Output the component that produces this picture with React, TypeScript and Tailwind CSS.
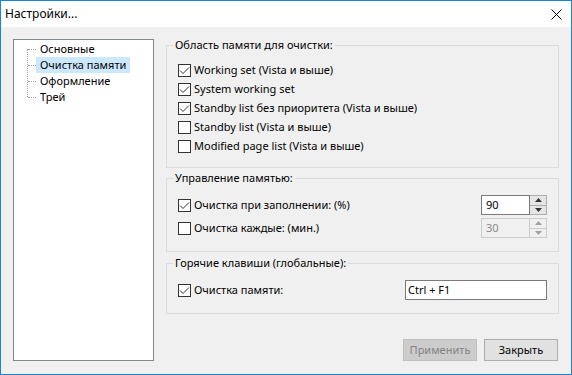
import React from "react";

const checked = [true, true, true, false, false];
const memoryItems = [
  "Working set (Vista и выше)",
  "System working set",
  "Standby list без приоритета (Vista и выше)",
  "Standby list (Vista и выше)",
  "Modified page list (Vista и выше)",
];
const treeItems = ["Основные", "Очистка памяти", "Оформление", "Трей"];

function CheckBox({ on }: { on: boolean }) {
  return (
    <span className="w-[13px] h-[13px] border border-[#333333] bg-white flex items-center justify-center shrink-0">
      {on && (
        <svg width="11" height="11" viewBox="0 0 11 11">
          <path d="M1 5.5 L4 8.5 L10 2.5" fill="none" stroke="#333333" strokeWidth="1" />
        </svg>
      )}
    </span>
  );
}

function Check({ on, label }: { on: boolean; label: string }) {
  return (
    <div className="flex items-center h-[19px]">
      <CheckBox on={on} />
      <span className="ml-[3px] whitespace-nowrap">{label}</span>
    </div>
  );
}

function Spin({ value, disabled }: { value: string; disabled?: boolean }) {
  return (
    <div className="flex h-[20px]">
      <div
        className={
          disabled
            ? "w-[49px] h-full border border-[#cccccc] bg-[#f0f0f0] text-[#8a8a8a] pl-[4px] leading-[18px]"
            : "w-[49px] h-full border border-[#7a7a7a] bg-white pl-[4px] leading-[18px]"
        }
      >
        {value}
      </div>
      <div className="w-[17px] h-full flex flex-col">
        <div
          className={
            disabled
              ? "flex-1 border border-l-0 border-[#cccccc] bg-[#f0f0f0] flex items-center justify-center"
              : "flex-1 border border-l-0 border-[#adadad] bg-[#e5e5e5] flex items-center justify-center"
          }
        >
          <svg width="7" height="4" viewBox="0 0 7 4">
            <path d="M0 4 L3.5 0 L7 4 Z" fill={disabled ? "#a0a0a0" : "#333333"} />
          </svg>
        </div>
        <div
          className={
            disabled
              ? "flex-1 border border-l-0 border-t-0 border-[#cccccc] bg-[#f0f0f0] flex items-center justify-center"
              : "flex-1 border border-l-0 border-t-0 border-[#adadad] bg-[#e5e5e5] flex items-center justify-center"
          }
        >
          <svg width="7" height="4" viewBox="0 0 7 4">
            <path d="M0 0 L3.5 4 L7 0 Z" fill={disabled ? "#a0a0a0" : "#333333"} />
          </svg>
        </div>
      </div>
    </div>
  );
}

function Group({ title, className, children }: { title: string; className: string; children: React.ReactNode }) {
  return (
    <fieldset className={"border border-[#dcdcdc] px-[11px] " + className}>
      <legend className="ml-[-5px] px-[2px] leading-[16px]">{title}</legend>
      {children}
    </fieldset>
  );
}

export default function App() {
  return (
    <div className="w-[572px] h-[375px] border border-[#1883d7] bg-[#f0f0f0] flex flex-col text-[11px] text-black font-['Noto_Sans','DejaVu_Sans',sans-serif] overflow-hidden">
      {/* title bar */}
      <div className="h-[26px] bg-white flex items-center justify-between pl-[4px] pr-[9px] shrink-0 text-[12px]">
        <span>Настройки...</span>
        <svg width="11" height="11" viewBox="0 0 11 11">
          <path d="M0.5 0.5 L10.5 10.5 M10.5 0.5 L0.5 10.5" stroke="#000" strokeWidth="1" />
        </svg>
      </div>

      <div className="flex pl-[12px] pt-[10px]">
        {/* tree */}
        <div className="mt-[2px] w-[141px] h-[322px] border border-[#828790] bg-white pt-[1px] pl-[13px]">
          <div className="relative">
            <span className="absolute left-0 top-[8px] h-[48px] border-l border-dotted border-[#a0a0a0]" />
            {treeItems.map((t, i) => (
              <div key={t} className="flex items-center h-[16px]">
                <span className="w-[8px] ml-[1px] border-t border-dotted border-[#a0a0a0]" />
                <span
                  className={
                    i === 1
                      ? "h-[16px] leading-[16px] px-[4px] bg-[#cce8ff] whitespace-nowrap"
                      : "h-[16px] leading-[16px] px-[4px] whitespace-nowrap"
                  }
                >
                  {t}
                </span>
              </div>
            ))}
          </div>
        </div>

        {/* settings */}
        <div className="ml-[12px] w-[393px] flex flex-col">
          <Group title="Область памяти для очистки:" className="h-[131px]">
            <div className="mt-[8px] flex flex-col">
              {memoryItems.map((m, i) => (
                <Check key={m} on={checked[i]} label={m} />
              ))}
            </div>
          </Group>

          <Group title="Управление памятью:" className="h-[82px] mt-[2px]">
            <div className="mt-[9px] flex flex-col gap-[3px]">
              <div className="flex items-center justify-between">
                <Check on={true} label="Очистка при заполнении: (%)" />
                <Spin value="90" />
              </div>
              <div className="flex items-center justify-between">
                <Check on={false} label="Очистка каждые: (мин.)" />
                <Spin value="30" disabled />
              </div>
            </div>
          </Group>

          <Group title="Горячие клавиши (глобальные):" className="h-[59px] mt-[3px]">
            <div className="mt-[9px] flex items-center justify-between">
              <Check on={true} label="Очистка памяти:" />
              <div className="w-[142px] h-[20px] border border-[#7a7a7a] bg-white pl-[2px] leading-[18px]">
                Ctrl + F1
              </div>
            </div>
          </Group>

          <div className="mt-[25px] flex justify-end gap-[7px] mr-[1px]">
            <button className="w-[74px] h-[22px] border border-[#bfbfbf] bg-[#cccccc] text-[#838383]">
              Применить
            </button>
            <button className="w-[74px] h-[22px] border border-[#adadad] bg-[#e1e1e1]">
              Закрыть
            </button>
          </div>
        </div>
      </div>
    </div>
  );
}
